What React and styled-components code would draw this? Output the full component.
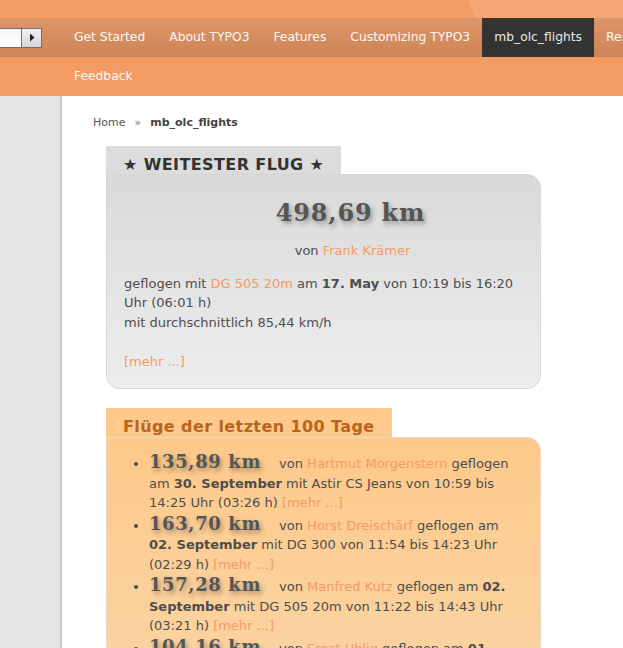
import React from 'react'
import { styled, createGlobalStyle } from 'styled-components'

const GlobalStyle = createGlobalStyle`
  html, body {
    margin: 0;
    padding: 0;
    overflow: hidden;
  }
  body {
    font-family: "DejaVu Sans", Verdana, sans-serif;
    font-size: 13px;
    color: #4d4d4d;
    background: #fff;
  }
`;

const navItems = ['Get Started', 'About TYPO3', 'Features', 'Customizing TYPO3', 'mb_olc_flights', 'Resources']

const flights = [
  { km: '135,89 km', pilot: 'Hartmut Morgenstern', date: '30. September', plane: 'Astir CS Jeans', from: '10:59', to: '14:25', dur: '03:26' },
  { km: '163,70 km', pilot: 'Horst Dreischärf', date: '02. September', plane: 'DG 300', from: '11:54', to: '14:23', dur: '02:29' },
  { km: '157,28 km', pilot: 'Manfred Kutz', date: '02. September', plane: 'DG 505 20m', from: '11:22', to: '14:43', dur: '03:21' },
  { km: '104,16 km', pilot: 'Ernst Uhlig', date: '01. September', plane: 'LS 4', from: '12:10', to: '14:02', dur: '01:52' },
]

const App = () => {
  return (
    <Page>
      <GlobalStyle />
      <Header>
        <TopStrip />
        <NavRow>
          <SelectBox>
            <SelectField />
            <SelectButton>
              <svg width="6" height="9" viewBox="0 0 6 9"><path d="M1 0.5 L5.5 4.5 L1 8.5 Z" fill="#222" /></svg>
            </SelectButton>
          </SelectBox>
          {navItems.map((item) => (
            <NavItem key={item} $active={item === 'mb_olc_flights'}>{item}</NavItem>
          ))}
        </NavRow>
        <NavRowTwo>
          <NavItem>Feedback</NavItem>
        </NavRowTwo>
      </Header>
      <Body>
        <Sidebar />
        <Main>
          <Breadcrumb>
            <Crumb>Home</Crumb>
            <Sep>»</Sep>
            <CrumbCurrent>mb_olc_flights</CrumbCurrent>
          </Breadcrumb>

          <Panel>
            <Tab>★ WEITESTER FLUG ★</Tab>
            <PanelBody>
              <BigDistance>498,69 km</BigDistance>
              <Pilot>von <Link>Frank Krämer</Link></Pilot>
              <Details>
                geflogen mit <Link>DG 505 20m</Link> am <b>17. May</b> von 10:19 bis 16:20 Uhr (06:01 h)
                <br />
                mit durchschnittlich 85,44 km/h
              </Details>
              <Link>[mehr ...]</Link>
            </PanelBody>
          </Panel>

          <Panel $spaced>
            <Tab $variant="orange">Flüge der letzten 100 Tage</Tab>
            <PanelBody $variant="orange">
              <FlightList>
                {flights.map((f) => (
                  <FlightItem key={f.km}>
                    <Distance>{f.km}</Distance>
                    von <Link>{f.pilot}</Link> geflogen am <b>{f.date}</b> mit {f.plane} von {f.from} bis {f.to} Uhr ({f.dur} h) <Link>[mehr ...]</Link>
                  </FlightItem>
                ))}
              </FlightList>
            </PanelBody>
          </Panel>
        </Main>
      </Body>
    </Page>
  )
}

const Page = styled.div`
  display: flex;
  flex-direction: column;
  min-height: 100vh;
`;

const Header = styled.header`
  background: #f29b63;
  position: relative;
  overflow: hidden;
`;

const TopStrip = styled.div`
  height: 18px;
  position: relative;

  &::after {
    content: '';
    position: absolute;
    top: 0;
    right: 0;
    left: 468px;
    height: 18px;
    background: #f4a776;
    clip-path: polygon(0 0, 100% 0, 100% 100%, 7px 100%);
  }
`;

const NavRow = styled.nav`
  height: 39px;
  display: flex;
  align-items: center;
  white-space: nowrap;
  background: linear-gradient(#dd9669, #cd8557);
`;

const NavRowTwo = styled.nav`
  height: 39px;
  display: flex;
  align-items: center;
  padding-left: 62px;
`;

const SelectBox = styled.div`
  width: 42px;
  height: 20px;
  flex-shrink: 0;
  display: flex;
  margin-right: 20px;
  box-sizing: border-box;
  border: 1px solid #6f6f6f;
  border-left: none;
`;

const SelectField = styled.div`
  flex: 1;
  background: linear-gradient(#f4f4f4, #ffffff);
`;

const SelectButton = styled.div`
  width: 19px;
  border-left: 1px solid #6f6f6f;
  background: linear-gradient(#f2f2f2, #d6d6d6);
  display: flex;
  align-items: center;
  justify-content: center;
`;

const NavItem = styled.a`
  display: block;
  flex-shrink: 0;
  padding: 0 12px;
  line-height: 39px;
  font-size: 12.3px;
  color: ${(p) => (p.$active ? '#e8e8e8' : '#fdf7f2')};
  background: ${(p) => (p.$active ? '#333333' : 'transparent')};
`;

const Body = styled.div`
  flex: 1;
  display: flex;
`;

const Sidebar = styled.aside`
  width: 60px;
  flex-shrink: 0;
  background: #e5e5e5;
  border-right: 2px solid #c9c9c9;
`;

const Main = styled.main`
  flex: 1;
  padding: 20px 0 0 31px;
`;

const Breadcrumb = styled.div`
  font-size: 11px;
  line-height: 14px;
  color: #555;
  display: flex;
  gap: 9px;
`;

const Crumb = styled.span``;

const Sep = styled.span`
  color: #777;
`;

const CrumbCurrent = styled.span`
  font-weight: bold;
  color: #444;
`;

const Panel = styled.section`
  width: 435px;
  margin: ${(p) => (p.$spaced ? '19px' : '16px')} 0 0 13px;
`;

const Tab = styled.div`
  display: inline-block;
  height: ${(p) => (p.$variant === 'orange' ? '29px' : '28px')};
  box-sizing: border-box;
  padding: 10px 17px 0;
  line-height: 18px;
  font-size: 16px;
  font-weight: bold;
  letter-spacing: 0.4px;
  color: ${(p) => (p.$variant === 'orange' ? '#b9641f' : '#333')};
  background: ${(p) => (p.$variant === 'orange' ? '#fec98a' : '#dcdcdc')};
`;

const PanelBody = styled.div`
  box-sizing: border-box;
  border: 1px solid ${(p) => (p.$variant === 'orange' ? '#e6d7c6' : '#d6d6d6')};
  border-radius: 0 14px 14px 14px;
  padding: ${(p) => (p.$variant === 'orange' ? '13px 17px 20px' : '23px 17px 17px')};
  background: ${(p) =>
    p.$variant === 'orange'
      ? 'linear-gradient(#fec98a, #f8dcb4 400px)'
      : 'linear-gradient(#dadada, #ededed)'};
  line-height: 19.5px;
`;

const BigDistance = styled.div`
  text-align: center;
  padding-left: 54px;
  font-family: "DejaVu Serif", Georgia, serif;
  font-weight: bold;
  font-size: 24px;
  letter-spacing: 0.8px;
  line-height: 30px;
  color: #555;
  text-shadow: 2px 3px 5px rgba(0, 0, 0, 0.35);
`;

const Pilot = styled.div`
  text-align: center;
  padding-left: 58px;
  margin-top: 13px;
`;

const Details = styled.p`
  margin: 13px 0 19.5px;
`;

const Link = styled.a`
  color: #f39a66;
`;

const FlightList = styled.ul`
  margin: 0;
  padding-left: 25px;
`;

const FlightItem = styled.li`
  line-height: 19.5px;
`;

const Distance = styled.span`
  font-family: "DejaVu Serif", Georgia, serif;
  font-weight: bold;
  font-size: 18px;
  letter-spacing: 0.6px;
  line-height: 22.5px;
  color: #555;
  margin-right: 18px;
  text-shadow: 2px 3px 5px rgba(0, 0, 0, 0.35);
`;

export default App
